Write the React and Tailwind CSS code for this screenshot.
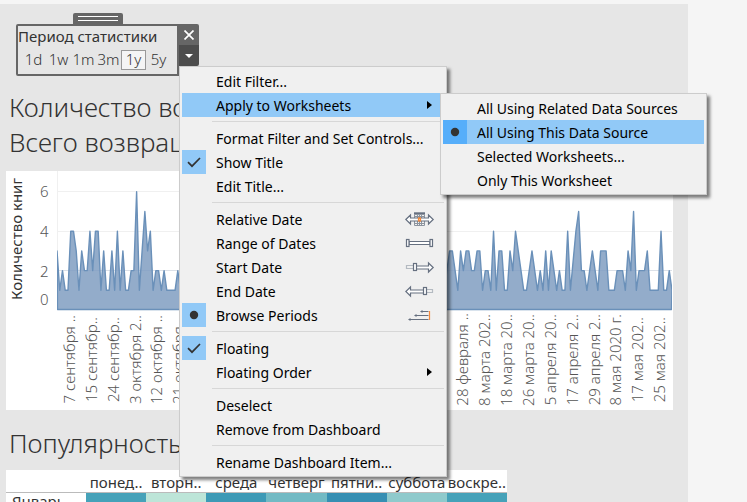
import React from "react";

const START = [
  3, 1, 2, 1, 1, 4, 4, 3, 1, 3, 2, 2, 4, 2, 4, 4, 1, 3, 1, 1, 3, 1, 4, 1, 3, 1, 1, 2, 2, 6, 1, 3, 5,
  3, 4, 1, 2, 2, 1, 2, 1, 1, 1, 1, 2, 1,
];
const END = [
  2, 3, 3, 2, 1, 3, 2, 3, 3, 2, 2, 3, 3, 1, 2, 2, 1, 4, 1, 3, 3, 1, 1, 3, 2, 4, 3, 2, 1, 1, 2, 3, 2,
  1, 2, 1, 3, 1, 3, 2, 1, 2, 1, 1, 4, 1, 2.5, 4, 5, 2, 2, 1, 2, 3, 2, 1, 3, 3, 3, 1, 1, 1, 2, 2, 2,
  1, 3, 2, 5, 1, 2, 2, 2, 3, 1, 1, 1, 1, 4, 1, 1, 2, 1,
];
const DAYS = 225;
const VALUES = [...START, ...Array(DAYS - START.length - END.length).fill(1), ...END];

const DATES = [
  "7 сентября ..", "15 сентябр..", "24 сентябр..", "3 октября 2..", "12 октября ..", "21 октября ..",
  "", "", "", "", "", "", "", "", "", "", "", "",
  "28 февраля ..", "8 марта 202..", "18 марта 20..", "26 марта 20..", "5 апреля 20..", "17 апреля 2..",
  "29 апреля 2..", "8 мая 2020 г.", "17 мая 202..", "25 мая 202..",
];

const WEEK = [
  { day: "понед..", color: "bg-[#46a2b9]" },
  { day: "вторн..", color: "bg-[#bde5d8]" },
  { day: "среда", color: "bg-[#3d9ab6]" },
  { day: "четверг", color: "bg-[#72bac4]" },
  { day: "пятни..", color: "bg-[#368fb3]" },
  { day: "суббота", color: "bg-[#8fcacc]" },
  { day: "воскре..", color: "bg-[#46a2b9]" },
];

function AreaChart() {
  const pts = VALUES.map((v, i) => `${(i * 615) / (DAYS - 1)},${139 - v * 19.7}`);
  return (
    <svg
      className="block h-[140px] w-full"
      viewBox="0 0 615 140"
      preserveAspectRatio="none"
      role="img"
      aria-label="Количество книг"
    >
      {[20.5, 60.5, 99.5].map((y) => (
        <line key={y} x1="0" x2="615" y1={y} y2={y} stroke="#f0f0f0" />
      ))}
      <line x1="0.5" x2="0.5" y1="0" y2="139" stroke="#f0f0f0" />
      <polygon points={`0,139 ${pts.join(" ")} 615,139`} fill="#93acca" />
      <line x1="0" x2="615" y1="99.5" y2="99.5" stroke="#6a90b9" strokeOpacity="0.15" />
      <polygon
        points={`0.5,138.5 ${pts.join(" ")} 614.5,138.5`}
        fill="none"
        stroke="#6a90b9"
        strokeWidth="1.4"
        strokeLinejoin="round"
      />
    </svg>
  );
}

function Check() {
  return (
    <svg className="size-6" viewBox="0 0 24 24" fill="none" stroke="#333" strokeWidth="1.7">
      <path d="M6 12.2l4 4 8-8.200" />
    </svg>
  );
}

function Dot() {
  return (
    <svg className="size-6" viewBox="0 0 24 24" fill="#333">
      <circle cx="12" cy="12" r="4.200" />
    </svg>
  );
}

function ModeIcon({ kind }) {
  return (
    <svg className="block h-5 w-[30px]" viewBox="0 0 30 20" fill="none" stroke="#667080" strokeWidth="1.2">
      {kind === "relative" && (
        <>
          <path d="M9.500 6v10.500h10V6M12.500 6v10.500M14.500 6v10.500M16.500 6v10.500M9.500 14.500h10M9.500 7.500h10" stroke="#8b939e" strokeWidth="1" />
          <path d="M9 4.500h11" strokeWidth="2.400" />
          <path d="M.8 10.500L5.500 6v3h18V6l4.700 4.500-4.700 4.500v-3h-18v3z" fill="#fff" />
          <rect x="13.500" y="9" width="2" height="3" stroke="#f5883a" fill="#fbd38a" />
        </>
      )}
      {kind === "range" && (
        <>
          <path d="M4 8.500h21v3H4z" fill="#fff" />
          <rect x="1.500" y="6.500" width="2.500" height="7" fill="#fff" />
          <rect x="25" y="6.500" width="2.500" height="7" fill="#fff" />
        </>
      )}
      {kind === "start" && (
        <>
          <path d="M8.500 8.500h-7v3h7" stroke="#b4bac1" />
          <path d="M11 9h12.500V6l4.700 4.500-4.700 4.500v-3H11" fill="#fff" />
          <rect x="8.500" y="6.500" width="3" height="7" fill="#fff" />
        </>
      )}
      {kind === "end" && (
        <>
          <path d="M21 8.500h6.500v3H21" stroke="#b4bac1" />
          <path d="M19 9H5.500V6L.8 10.500 5.500 15v-3H19" fill="#fff" />
          <rect x="18.500" y="6.500" width="3" height="7" fill="#fff" />
        </>
      )}
      {kind === "periods" && (
        <>
          <path d="M16 6.500h7.500M10 10.500h13.500M4 14.500h19.500" />
          <path d="M17.500 5L15 6.500 17.500 8zM11.500 9L9 10.500l2.500 1.500zM5.500 13L3 14.500 5.500 16z" fill="#667080" stroke="none" />
          <path d="M24.500 6v9" stroke="#f5883a" />
        </>
      )}
    </svg>
  );
}

function MenuItem({ label, mark, icon, active, sub, children }) {
  const markBg = active ? "bg-[#56aefa]" : "bg-[#91c9f7]";
  return (
    <li className="relative">
      <button
        type="button"
        className={`flex h-6 w-full items-center text-left ${active || sub === "open" ? "bg-[#91c9f7]" : ""}`}
      >
        <span className={`mr-2.5 size-6 shrink-0 ${mark ? markBg : ""}`}>
          {mark === "check" && <Check />}
          {mark === "dot" && <Dot />}
        </span>
        <span className="flex-1 pt-0.5 leading-5 whitespace-nowrap">{label}</span>
        {icon && (
          <span className="mr-[9px]">
            <ModeIcon kind={icon} />
          </span>
        )}
        {sub && (
          <svg className="mr-3 h-2 w-[5px]" viewBox="0 0 5 8">
            <path d="M0 0l5 4-5 4z" />
          </svg>
        )}
      </button>
      {children}
    </li>
  );
}

function Separator() {
  return <li role="separator" className="my-1 ml-[30px] h-px bg-[#d7d7d7]" />;
}

const MENU =
  "absolute border border-[#ccc] bg-[#f0f0f0] p-0.5 text-[14px] text-black shadow-[3px_3px_3px_rgba(0,0,0,0.5)] font-['Noto_Sans',sans-serif]";

function FilterMenu() {
  return (
    <ul className={`${MENU} top-[42px] left-[163px] z-10 w-[268px]`}>
      <MenuItem label="Edit Filter..." />
      <MenuItem label="Apply to Worksheets" sub="open">
        <ul className={`${MENU} top-0 left-[258px] z-20 w-[267px]`}>
          <MenuItem label="All Using Related Data Sources" />
          <MenuItem label="All Using This Data Source" mark="dot" active />
          <MenuItem label="Selected Worksheets..." />
          <MenuItem label="Only This Worksheet" />
        </ul>
      </MenuItem>
      <Separator />
      <MenuItem label="Format Filter and Set Controls..." />
      <MenuItem label="Show Title" mark="check" />
      <MenuItem label="Edit Title..." />
      <Separator />
      <MenuItem label="Relative Date" icon="relative" />
      <MenuItem label="Range of Dates" icon="range" />
      <MenuItem label="Start Date" icon="start" />
      <MenuItem label="End Date" icon="end" />
      <MenuItem label="Browse Periods" mark="dot" icon="periods" />
      <Separator />
      <MenuItem label="Floating" mark="check" />
      <MenuItem label="Floating Order" sub="closed" />
      <Separator />
      <MenuItem label="Deselect" />
      <MenuItem label="Remove from Dashboard" />
      <Separator />
      <MenuItem label="Rename Dashboard Item..." />
    </ul>
  );
}

function FilterCard() {
  return (
    <section className="relative ml-4 w-[183px]">
      <div className="ml-[57px] flex h-[11px] w-[50px] flex-col gap-[3px] rounded-t-xs bg-[#666] px-[5px] pt-[3px]">
        <span className="h-px bg-white" />
        <span className="h-px bg-white" />
      </div>
      <div className="relative flex items-start">
        <div className="h-[52px] flex-1 rounded-l-xs border-2 border-[#666]">
          <h3 className="text-[15px] leading-5 whitespace-nowrap text-[#333]">Период статистики</h3>
          <div className="mt-1 ml-[3px] flex">
            {["1d", "1w", "1m", "3m", "1y", "5y"].map((p) => (
              <button
                key={p}
                type="button"
                className={`flex h-5 w-[25px] items-start justify-center border text-[15px] leading-4 font-light text-[#333] ${
                  p === "1y" ? "border-[#999] bg-[#f5f5f5]" : "border-transparent"
                }`}
              >
                {p}
              </button>
            ))}
          </div>
        </div>
        <div className="flex w-5 flex-col overflow-hidden rounded-r-xs">
          <button type="button" aria-label="Close" className="flex h-[21px] items-center justify-center bg-[#666]">
            <svg className="size-2.5" viewBox="0 0 10 10" stroke="#fff" strokeWidth="1.700">
              <path d="M.5.5l9 9M9.500.5l-9 9" />
            </svg>
          </button>
          <button type="button" aria-label="More" className="flex h-[21px] items-center justify-center bg-[#4d4d4d]">
            <svg className="h-1 w-2" viewBox="0 0 8 4" fill="#fff">
              <path d="M0 0h8L4 4z" />
            </svg>
          </button>
        </div>
        <FilterMenu />
      </div>
    </section>
  );
}

export default function App() {
  return (
    <div className="h-screen overflow-hidden bg-[#f5f5f5] pt-1 pr-[59px] font-['Noto_Sans',sans-serif] text-[#333]">
      <main className="min-h-full bg-[#e6e6e6] pt-[9px]">
        <FilterCard />

        <h2 className="mt-[14px] ml-[9px] text-[26px] leading-[35px] font-light whitespace-nowrap">
          Количество возвращений
          <br />
          Всего возвращено
        </h2>

        <section className="mt-[11px] mr-[15px] ml-1.5 bg-white pr-px">
          <div className="flex">
            <div className="flex w-[22px] items-center justify-center pr-0.5 pb-1">
              <span className="rotate-180 text-[15px] leading-5 whitespace-nowrap [writing-mode:vertical-rl]">
                Количество книг
              </span>
            </div>
            <div className="flex w-[29px] flex-col pt-2.5 pl-3 text-[15px] leading-5 font-light text-[#555]">
              <span className="h-10">6</span>
              <span className="h-10">4</span>
              <span className="h-7">2</span>
              <span>0</span>
            </div>
            <div className="min-w-0 flex-1">
              <AreaChart />
            </div>
          </div>
          <div className="flex h-[99px] pr-[2px] pb-0.5 pl-[52px] text-[15px] leading-5 font-light text-[#555]">
            {DATES.map((d, i) => (
              <span key={i} className="flex min-w-0 flex-1 items-center justify-center">
                <span className="rotate-180 whitespace-nowrap [writing-mode:vertical-rl]">{d}</span>
              </span>
            ))}
          </div>
        </section>

        <h2 className="mt-4 ml-[9px] text-[26px] leading-[35px] font-light">Популярность</h2>

        <table className="mt-[9px] ml-1.5 w-[501px] table-fixed bg-white text-[15px] leading-5">
          <thead>
            <tr className="h-[22px] border-b border-[#bbb]">
              <th className="w-20 p-0" />
              {WEEK.map((w) => (
                <th key={w.day} scope="col" className="p-0 text-center align-bottom font-normal whitespace-nowrap">
                  {w.day}
                </th>
              ))}
            </tr>
          </thead>
          <tbody>
            <tr>
              <th scope="row" className="py-0 pl-1.5 text-left leading-4 font-normal">
                Январь
              </th>
              {WEEK.map((w) => (
                <td key={w.day} className={w.color} />
              ))}
            </tr>
          </tbody>
        </table>
      </main>
    </div>
  );
}
